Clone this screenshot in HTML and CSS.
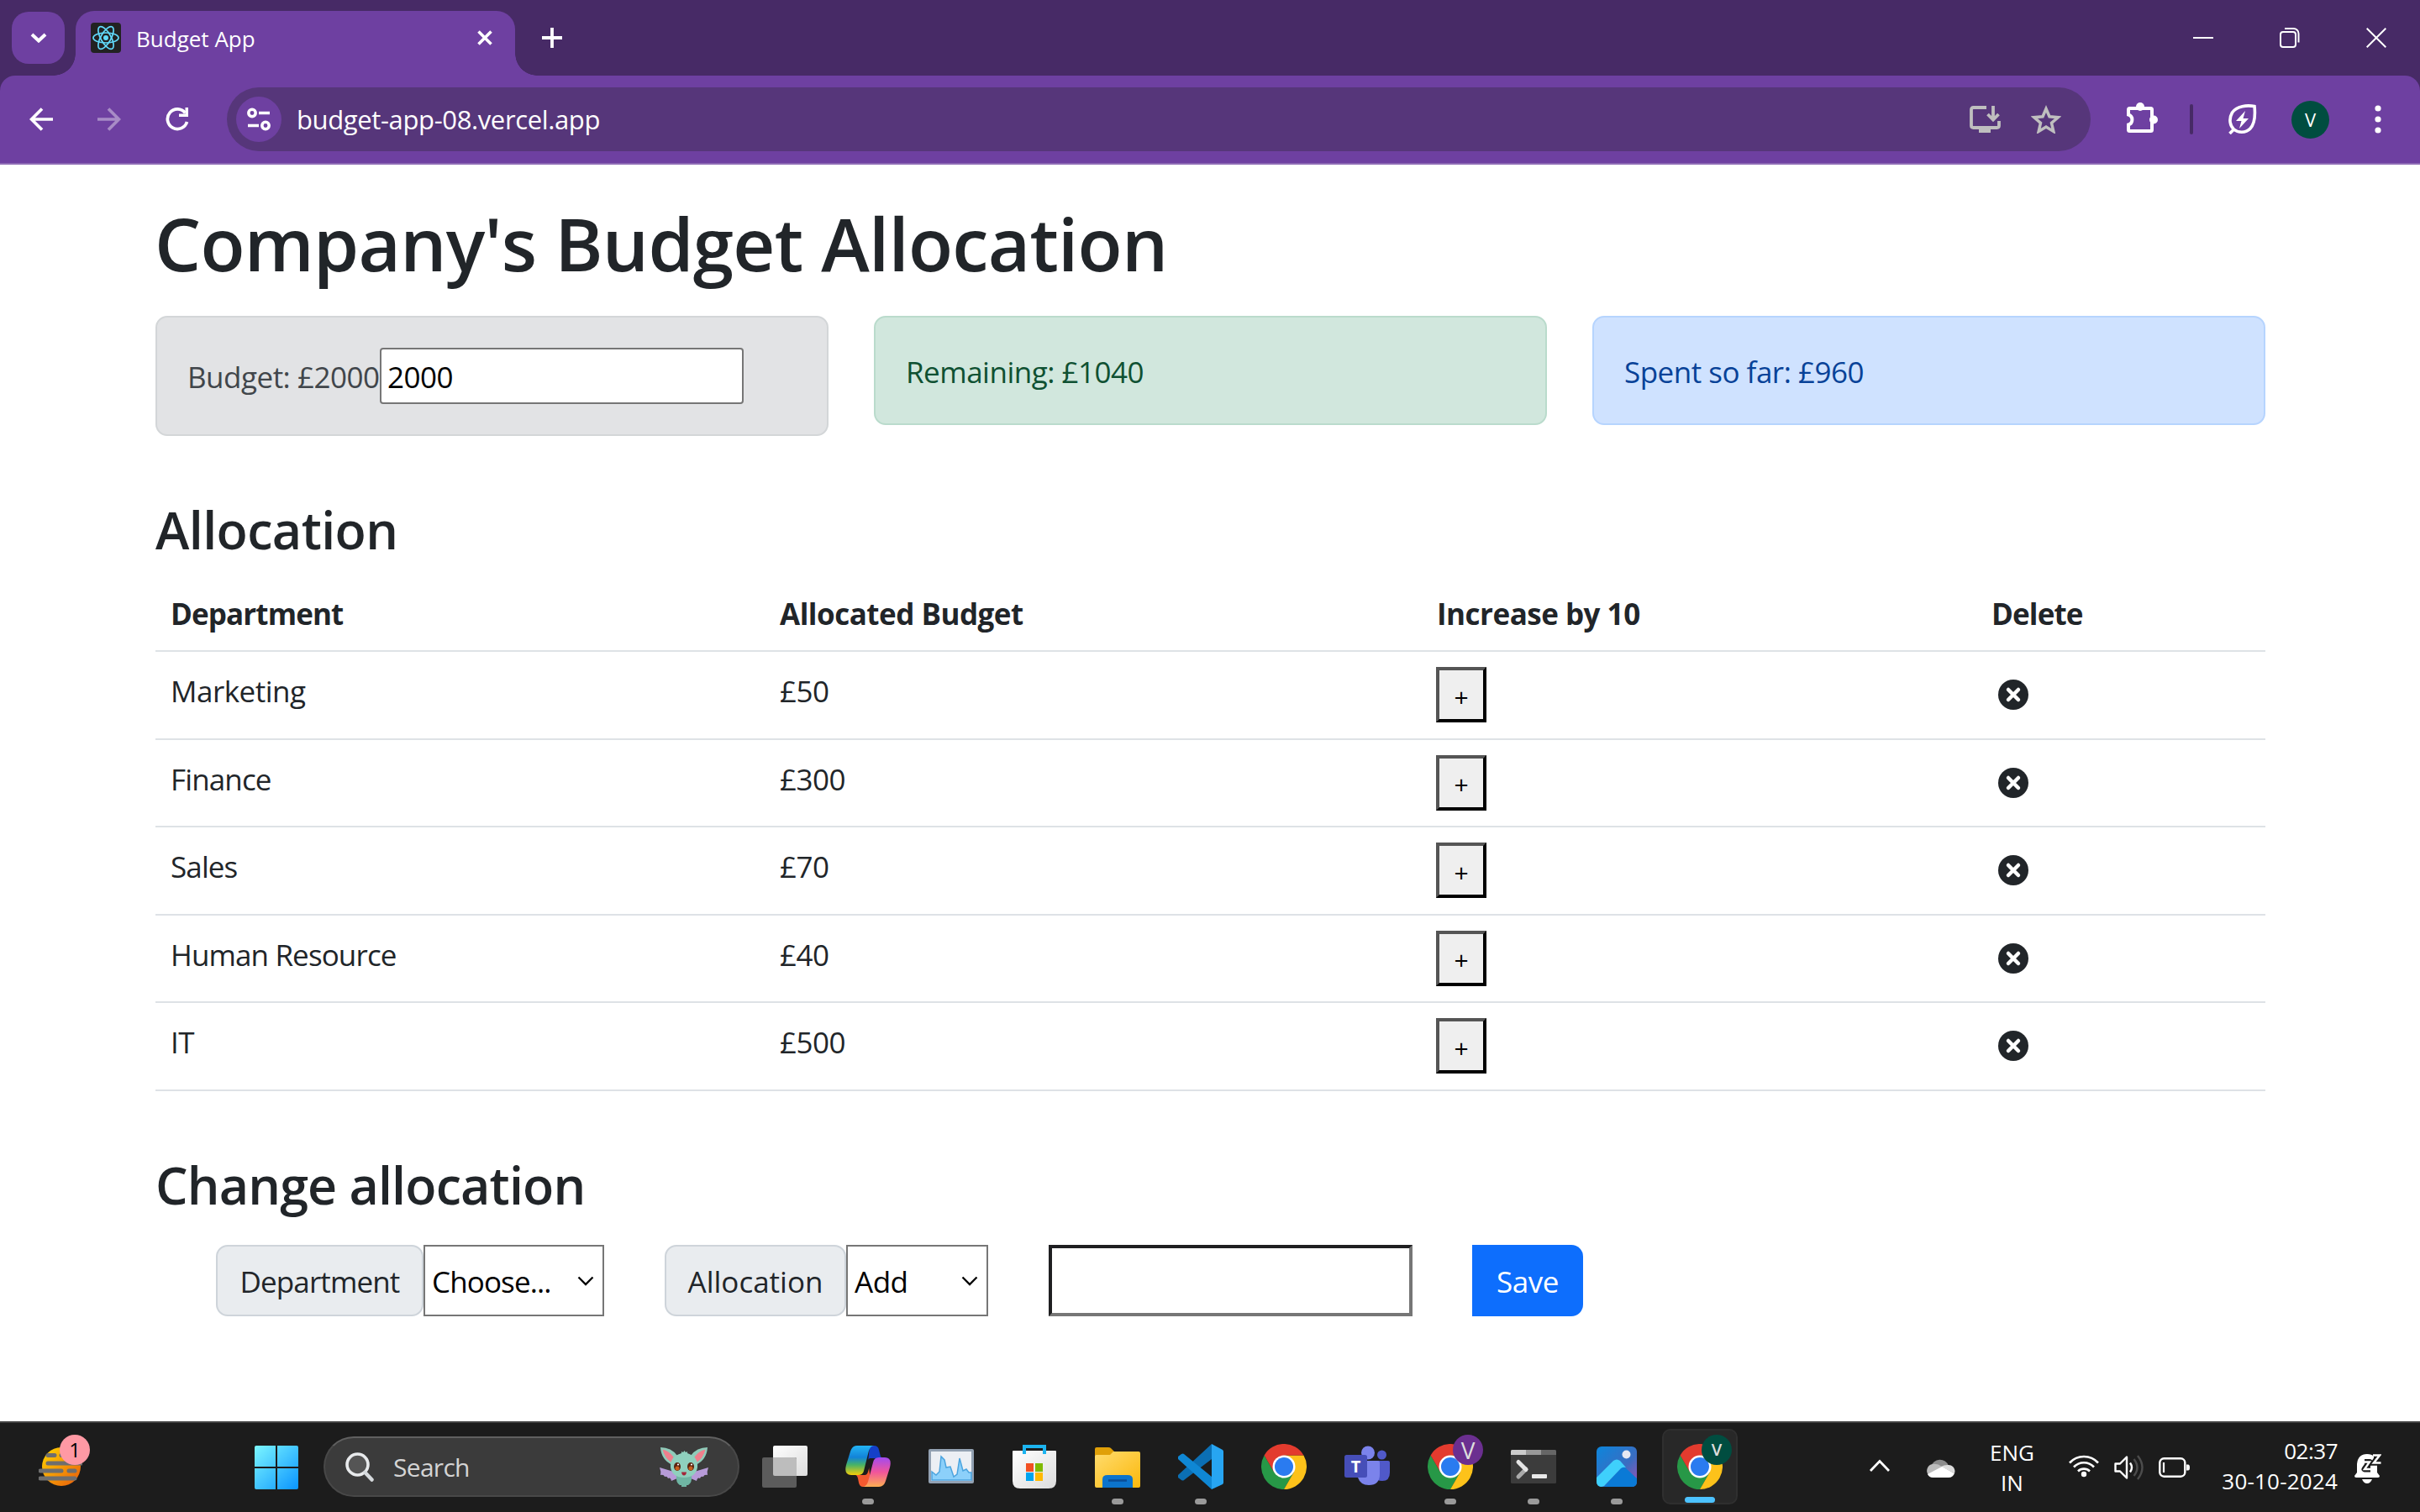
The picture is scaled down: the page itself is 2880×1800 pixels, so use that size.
FILE: index.html
```html
<!DOCTYPE html>
<html lang="en">
<head>
<meta charset="utf-8">
<title>Budget App</title>
<link rel="stylesheet" href="styles.css">
</head>
<body>
<header class="browser">
  <div class="tabstrip">
    <div class="tab-search"><svg width="20" height="12" viewBox="0 0 20 12"><path d="M2 2l8 7.500 8-7.500" fill="none" stroke="#fff" stroke-width="4"/></svg></div>
    <div class="tab">
      <svg class="favicon" width="36" height="36" viewBox="0 0 36 36"><rect width="36" height="36" rx="4" fill="#222"/><g fill="none" stroke="#61dafb" stroke-width="1.700"><ellipse cx="18" cy="18" rx="15" ry="6"/><ellipse cx="18" cy="18" rx="15" ry="6" transform="rotate(60 18 18)"/><ellipse cx="18" cy="18" rx="15" ry="6" transform="rotate(120 18 18)"/></g><circle cx="18" cy="18" r="3" fill="#61dafb"/></svg>
      <span class="tab-title">Budget App</span>
      <svg class="tab-close" width="18" height="18" viewBox="0 0 18 18"><path d="M1.500 1.500l15 15M16.500 1.500l-15 15" stroke="#fff" stroke-width="3.600"/></svg>
    </div>
    <svg class="new-tab" width="24" height="24" viewBox="0 0 24 24"><path d="M12 0v24M0 12h24" stroke="#fff" stroke-width="3.800"/></svg>
    <div class="window-controls">
      <svg width="24" height="24" viewBox="0 0 24 24"><path d="M0 12h24" stroke="#fff" stroke-width="2"/></svg>
      <svg width="24" height="24" viewBox="0 0 24 24"><g fill="none" stroke="#fff" stroke-width="2"><rect x="1" y="5" width="18" height="18" rx="3"/><path d="M6 1h10.500a6 6 0 0 1 6 6v10.500"/></g></svg>
      <svg width="24" height="24" viewBox="0 0 24 24"><path d="M.7.7l22.600 22.600M23.300.7L.7 23.300" stroke="#fff" stroke-width="2"/></svg>
    </div>
  </div>
  <div class="toolbar">
    <svg class="nav" width="28" height="28" viewBox="0 0 28 28"><path d="M28 14H3M15 1.500L2.500 14 15 26.500" fill="none" stroke="#fff" stroke-width="3.700"/></svg>
    <svg class="nav forward" width="28" height="28" viewBox="0 0 28 28"><path d="M0 14h25M13 1.500L25.500 14 13 26.500" fill="none" stroke="#fff" stroke-width="3.700"/></svg>
    <svg class="nav" width="28" height="28" viewBox="0 0 28 28"><path d="M23.500 6.500A11.800 11.800 0 1 0 25.500 17" fill="none" stroke="#fff" stroke-width="3.700"/><path d="M27 0v11H16V7.500h7.500V0z" fill="#fff"/></svg>
    <div class="omnibox">
      <div class="site-info"><svg width="30" height="28" viewBox="0 0 30 28"><g fill="none" stroke="#fff" stroke-width="3.500"><circle cx="7" cy="6.500" r="4.200"/><path d="M15 6.500h13M2 21.500h13"/><circle cx="23" cy="21.500" r="4.200"/></g></svg></div>
      <span class="url">budget-app-08.vercel.app</span>
      <svg class="install" width="37" height="32" viewBox="0 0 37 32"><g fill="none" stroke="#bfbfbf" stroke-width="3.800"><path d="M20 2H4.500Q2 2 2 4.500v19Q2 26 4.500 26h28q2.500 0 2.500-2.500V18M28 0v16M21.500 10l6.500 6.500 6.500-6.500"/></g><path d="M11 26h14v6H11z" fill="#bfbfbf"/></svg>
      <svg width="36" height="34" viewBox="0 0 36 34"><path d="M18 4.500l4 9.300 10.200.9-7.700 6.700 2.300 10-8.800-5.300-8.800 5.300 2.300-10-7.700-6.700L14 13.800z" fill="none" stroke="#bfbfbf" stroke-width="3.500"/></svg>
    </div>
    <svg class="puzzle" width="38" height="36" viewBox="0 0 38 36"><path d="M2 8.500Q2 7 3.500 7h25Q30 7 30 8.500v24q0 1.500-1.500 1.500h-25Q2 34 2 32.500v-6a6.300 6.300 0 0 0 0-12z" fill="none" stroke="#fff" stroke-width="4"/><circle cx="16" cy="5" r="5" fill="#fff"/><circle cx="32" cy="20.500" r="5" fill="#fff"/></svg>
    <i class="divider"></i>
    <svg class="leaf" width="34" height="36" viewBox="0 0 34 36"><path d="M31 2.500C22 1 10 2 4.500 10 0 18 2 26 6.500 30s14 5 19.500-1S32 12 31 2.500zM1.500 35l6-6" fill="none" stroke="#fff" stroke-width="3.600"/><path d="M20 8L9 20h6.500L13 29l11-12h-6.500z" fill="#fff"/></svg>
    <div class="avatar">V</div>
    <svg class="menu" width="8" height="34" viewBox="0 0 8 34" fill="#fff"><circle cx="4" cy="4" r="3.600"/><circle cx="4" cy="17" r="3.600"/><circle cx="4" cy="30" r="3.600"/></svg>
  </div>
</header>

<main class="container">
  <h1>Company's Budget Allocation</h1>
  <section class="alerts">
    <div class="alert secondary"><span>Budget: £2000</span><div class="budget-input"><span>2000</span></div></div>
    <div class="alert success"><span>Remaining: £1040</span></div>
    <div class="alert primary"><span>Spent so far: £960</span></div>
  </section>
  <h3 class="allocation-title">Allocation</h3>
  <div class="table">
    <div class="row head"><b class="tight">Department</b><b>Allocated Budget</b><b>Increase by 10</b><b class="tight">Delete</b></div>
    <div class="row"><span>Marketing</span><span>£50</span><button class="plus">+</button><svg class="delete" viewBox="0 0 36 36"><use href="#x"/></svg></div>
    <div class="row"><span class="tight">Finance</span><span>£300</span><button class="plus">+</button><svg class="delete" viewBox="0 0 36 36"><use href="#x"/></svg></div>
    <div class="row"><span class="tight">Sales</span><span>£70</span><button class="plus">+</button><svg class="delete" viewBox="0 0 36 36"><use href="#x"/></svg></div>
    <div class="row"><span class="tight">Human Resource</span><span>£40</span><button class="plus">+</button><svg class="delete" viewBox="0 0 36 36"><use href="#x"/></svg></div>
    <div class="row"><span>IT</span><span>£500</span><button class="plus">+</button><svg class="delete" viewBox="0 0 36 36"><use href="#x"/></svg></div>
  </div>
  <h3 class="change-title">Change allocation</h3>
  <form class="change">
    <div class="label department"><span class="tight">Department</span></div>
    <div class="select wide"><span class="tight">Choose...</span><svg width="20" height="12" viewBox="0 0 20 12"><path d="M1.500 1.500L10 10l8.500-8.500" fill="none" stroke="#000" stroke-width="2.300"/></svg></div>
    <div class="label kind"><span>Allocation</span></div>
    <div class="select"><span>Add</span><svg width="20" height="12" viewBox="0 0 20 12"><path d="M1.500 1.500L10 10l8.500-8.500" fill="none" stroke="#000" stroke-width="2.300"/></svg></div>
    <div class="amount"></div>
    <div class="save"><span>Save</span></div>
  </form>
</main>

<footer class="taskbar">
  <div class="widget"><svg width="52" height="46" viewBox="0 0 52 46"><defs><linearGradient id="sun" x1="0" y1="0" x2="1" y2="1"><stop offset="0" stop-color="#ffd800"/><stop offset="1" stop-color="#e8590c"/></linearGradient></defs><circle cx="27" cy="23" r="23" fill="url(#sun)"/><path d="M11 9.500h8M27 9.500h6M11 19h40M2 28h25M36 28h7M2 37h41" stroke="#6e6e6e" stroke-width="5" stroke-linecap="round"/></svg><span class="count">1</span></div>
  <svg class="start" width="52" height="52" viewBox="0 0 52 52"><defs><linearGradient id="win" x1="0" y1="0" x2="1" y2="1"><stop offset="0" stop-color="#7cf6ff"/><stop offset="1" stop-color="#0a94ff"/></linearGradient></defs><path d="M2 0h23v25H0V2Q0 0 2 0zM27 0h23q2 0 2 2v23H27zM0 27h25v25H2q-2 0-2-2zM27 27h25v23q0 2-2 2H27z" fill="url(#win)"/></svg>
  <div class="search">
    <svg width="34" height="35" viewBox="0 0 34 35"><circle cx="14.500" cy="14.500" r="12.500" fill="#555" stroke="#e8eaec" stroke-width="3.600"/><path d="M23.500 24l8 8.500" stroke="#d6dadd" stroke-width="4.500" stroke-linecap="round"/></svg>
    <span>Search</span>
    <svg class="bat" width="58" height="48" viewBox="0 0 58 48"><path d="M20 31L0 25q2 5 1 9 4-1 5 2 3-1 4 2 3-2 4 3l7-3zM38 31l20-6q-2 5-1 9-4-1-5 2-3-1-4 2-3-2-4 3l-7-3z" fill="#b79bd8"/><path d="M15 22Q2 16 1 1q13 0 20 10zM43 22Q56 16 57 1q-13 0-20 10z" fill="#8fcbb9"/><path d="M14 19Q6 14 3.500 3.500q8 2 13 9zM44 19Q52 14 54.500 3.500q-8 2-13 9z" fill="#ef7f8c"/><path d="M20 34h18q1 9-4 12h-2v2h-6v-2h-2q-5-3-4-12z" fill="#6fb5a3"/><path d="M26 6l2 1 1.500-2L31 7l2-1v2q13 4 12 17-2 12-16 12T13 25Q12 12 26 8z" fill="#8fd0bd"/><ellipse cx="21" cy="24" rx="4" ry="5" fill="#5a2510"/><ellipse cx="37" cy="24" rx="4" ry="5" fill="#5a2510"/><ellipse cx="21" cy="26" rx="2.500" ry="2.500" fill="#c8601c"/><ellipse cx="37" cy="26" rx="2.500" ry="2.500" fill="#c8601c"/><circle cx="22" cy="21.500" r="1.100" fill="#fff"/><circle cx="38" cy="21.500" r="1.100" fill="#fff"/><path d="M26 30.500h6q-.5 4-3 4t-3-4z" fill="#a3263a"/></svg>
  </div>
  <div class="apps">
    <div class="app"><svg width="54" height="54" viewBox="0 0 54 54"><defs><linearGradient id="wh" x1="0" y1="0" x2="1" y2="1"><stop offset="0" stop-color="#fff"/><stop offset="1" stop-color="#dcdcdc"/></linearGradient></defs><rect x="13" y="2" width="41" height="36" rx="2" fill="url(#wh)"/><rect x="0" y="16" width="41" height="36" rx="2" fill="#5c5c5c"/><path d="M13 16h26q2 0 2 2v20H15q-2 0-2-2z" fill="#bdbdbd"/></svg></div>
    <div class="app running"><svg width="54" height="54" viewBox="0 0 54 54"><defs><linearGradient id="c1" x1="0" y1="0" x2="0" y2="1"><stop offset="0" stop-color="#23b4f4"/><stop offset=".4" stop-color="#1283d8"/><stop offset=".65" stop-color="#46b268"/><stop offset="1" stop-color="#f6cd09"/></linearGradient><linearGradient id="c2" x1="0" y1="0" x2="0" y2="1"><stop offset="0" stop-color="#a24af0"/><stop offset=".5" stop-color="#f0559b"/><stop offset="1" stop-color="#fdae52"/></linearGradient></defs><path d="M29 2h5q5 0 6 5l2 8q1 2 4 2H35q-6 0-8 5z" fill="#1440c8"/><path d="M14 37h6q5 0 6-5l2-5 2 17-5 7h-4q-4 0-5-5l-1-5q-1-4-3-4z" fill="#f4592f"/><path d="M14 2h20q-4 0-6 6l-6 24q-1 5-7 5H7q-9 0-6-12L6 9q2-7 8-7z" fill="url(#c1)"/><path d="M40 51H20q5 0 7-6l6-23q1-6 7-6h7q9 0 6 12l-5 16q-2 7-8 7z" fill="url(#c2)"/><path d="M29 17h5q-3 2-4 6l-3 10q-1 4-4 4h-3q2-1 3-5l3-11q1-3 3-4z" fill="#1c1c1c"/></svg></div>
    <div class="app"><svg width="54" height="54" viewBox="0 0 54 54"><rect y="6" width="54" height="41" rx="2" fill="#93a1b2"/><rect x="3" y="9" width="48" height="35" fill="#eceff4"/><path d="M4 33l5 4 4-4 2-18 4 4 2 9 5-1 4 12 4-3 3-19 4 15 4-2 3 4h3v9H4z" fill="#8cd0fa" stroke="#4ba4df" stroke-width="1.500"/></svg></div>
    <div class="app"><svg width="54" height="54" viewBox="0 0 54 54"><path d="M15 11V3h24v8" fill="none" stroke="#1cb4f0" stroke-width="4"/><path d="M1 9q0-1 1-1h50q1 0 1 1v35q0 9-9 9H10q-9 0-9-9z" fill="url(#wh)"/><path d="M13 8h4v4h-4zM37 8h4v4h-4z" fill="#1cb4f0"/><path d="M17 23h9v10h-9z" fill="#f25022"/><path d="M28 23h9v10h-9z" fill="#7fba00"/><path d="M17 35h9v10h-9z" fill="#00a4ef" transform="translate(0 -1)"/><path d="M28 34h9v10h-9z" fill="#ffb900"/></svg></div>
    <div class="app running"><svg width="54" height="54" viewBox="0 0 54 54"><defs><linearGradient id="fo" x1="0" y1="0" x2="1" y2="1"><stop offset="0" stop-color="#ffdc6e"/><stop offset="1" stop-color="#fbb80c"/></linearGradient></defs><path d="M0 6q0-2 2-2h14q2 0 3 1l4 4v10H0z" fill="#e0a008"/><path d="M0 15q0-2 2-2h16l4-4h30q2 0 2 2v39q0 2-2 2H2q-2 0-2-2z" fill="url(#fo)"/><path d="M9 52V42q0-5 6-5h24q6 0 6 5v10z" fill="#0c74cc"/><path d="M16 43.500h22" stroke="#0a4d96" stroke-width="2.500"/></svg></div>
    <div class="app running"><svg width="54" height="54" viewBox="0 0 54 54"><path d="M40 0L0 37q-1 2 0 3l4 3q2 1 3 0l33-25z" fill="#0b6fb4"/><path d="M40 54L0 18q-1-2 0-3l4-3q2-1 3 0l33 27z" fill="#0f87d4"/><path d="M40 0l13 7q1 1 1 2v37q0 1-1 2l-13 6z" fill="#27a5f2"/></svg></div>
    <div class="app"><svg width="54" height="54" viewBox="0 0 54 54"><use href="#chrome"/></svg></div>
    <div class="app"><svg width="54" height="54" viewBox="0 0 54 54"><circle cx="44.500" cy="13" r="5.500" fill="#5059c9"/><path d="M38 20h14q2 0 2 2v12q0 10-9 10-7 0-9-5z" fill="#5059c9"/><circle cx="28" cy="10.500" r="8" fill="#7b83eb"/><path d="M19 20h21q2 0 2 2v14q0 13-13 13-10 0-13-9z" fill="#7b83eb"/><rect y="13" width="27" height="27" rx="2.500" fill="#464eb8"/><text x="13.500" y="33.500" text-anchor="middle" class="glyph" font-size="20">T</text></svg></div>
    <div class="app running"><svg width="54" height="54" viewBox="0 0 54 54"><use href="#chrome"/></svg><span class="profile purple">V</span></div>
    <div class="app running"><svg width="54" height="54" viewBox="0 0 54 54"><rect y="7" width="54" height="40" rx="1.500" fill="#3c3c3c"/><path d="M0 13V8.500Q0 7 1.500 7H18v6z" fill="#ccc"/><path d="M18 7h18v6H18z" fill="#999"/><path d="M36 7h16.500Q54 7 54 8.500V13H36z" fill="#666"/><path d="M18 30l-9 9" stroke="#aaa" stroke-width="5" stroke-linecap="round"/><path d="M9 21.500l9 9" stroke="#e4e4e4" stroke-width="5" stroke-linecap="round"/><rect x="25" y="36" width="18" height="5" rx="1" fill="#e8e8e8"/></svg></div>
    <div class="app running"><svg width="54" height="54" viewBox="0 0 54 54"><defs><linearGradient id="ph" x1="0" y1="0" x2="1" y2="1"><stop offset="0" stop-color="#0c86dc"/><stop offset=".6" stop-color="#3b6cc0"/><stop offset="1" stop-color="#a050b4"/></linearGradient></defs><rect x="3" y="3" width="48" height="48" rx="6" fill="url(#ph)"/><path d="M12 51l20-22q3-3 6 0l13 12v4q0 6-6 6z" fill="#0a7ad6"/><path d="M3 40l20-20q4-3 8 0l7 8q-3-1-6 1L12 50q-2 1-4 1-5-1-5-6z" fill="#3fd0fc"/><circle cx="38.500" cy="12.500" r="5" fill="#e6e8f2"/></svg></div>
    <div class="app active"><svg width="54" height="54" viewBox="0 0 54 54"><use href="#chrome"/></svg><span class="profile green">V</span></div>
  </div>
  <div class="tray">
    <svg class="caret" width="26" height="16" viewBox="0 0 26 16"><path d="M2 14L13 2.500 24 14" fill="none" stroke="#fff" stroke-width="2.800"/></svg>
    <svg class="cloud" width="36" height="24" viewBox="0 0 36 24"><path d="M7 11a11 11 0 0 1 21-1l-10 4z" fill="#8c8c8c"/><path d="M4 21A8 8 0 0 1 9 8q6-1 11 3L5 22z" fill="#bcbcbc"/><path d="M27 9a7.500 7.500 0 0 1 8 10l-16-8q3-2 8-2z" fill="#dcdcdc"/><path d="M3 20l17-9 15 8q-2 5-7 5H9q-4 0-6-4z" fill="#fff"/></svg>
    <div class="lang"><span>ENG</span><span>IN</span></div>
    <svg class="wifi" width="36" height="28" viewBox="0 0 36 28"><g fill="none" stroke="#fff" stroke-width="2.600"><path d="M1 10.500a23 23 0 0 1 34 0M6 15.500a16.500 16.500 0 0 1 24 0M11 20.500a10 10 0 0 1 14 0"/></g><circle cx="18" cy="24" r="3.200" fill="#fff"/></svg>
    <svg class="volume" width="36" height="32" viewBox="0 0 36 32"><path d="M1.500 11.500h5.500l8-8v25l-8-8H1.500z" fill="none" stroke="#fff" stroke-width="2.400" stroke-linejoin="round"/><path d="M19 10.500q4 5.500 0 11" fill="none" stroke="#fff" stroke-width="2.400"/><path d="M23.500 6q8 10 0 20M28 2q11 14 0 28" fill="none" stroke="#4c4c4c" stroke-width="2.400"/></svg>
    <svg class="battery" width="37" height="24" viewBox="0 0 37 24"><rect x="1.300" y="1.300" width="30" height="21.400" rx="5" fill="none" stroke="#fff" stroke-width="2.400"/><path d="M33 8.500h2q2 0 2 3.500t-2 3.500h-2z" fill="#fff"/><path d="M6 6v12" stroke="#fff" stroke-width="2.200"/></svg>
    <div class="clock"><span class="time">02:37</span><span class="date">30-10-2024</span></div>
    <svg class="bell" width="32" height="36" viewBox="0 0 32 36"><path d="M3 23V13Q4 1 15 1t12 12v10l3 4q0 2-2 2H2q-2 0-2-2zM9 31h12q-2 5-6 5t-6-5z" fill="#fff"/><path d="M12 10.500h6l-6 8.500h7" fill="none" stroke="#1c1c1c" stroke-width="7" stroke-linejoin="round"/><path d="M12 10.500h6l-6 8.500h7" fill="none" stroke="#fff" stroke-width="2.400"/><path d="M23 2.500h6l-6 9h8" fill="none" stroke="#1c1c1c" stroke-width="6.500"/><path d="M22 2.500h8l-7 9h8.500" fill="none" stroke="#fff" stroke-width="2.600"/></svg>
  </div>
</footer>

<svg width="0" height="0" class="defs"><defs>
  <g id="x"><circle cx="18" cy="18" r="18" fill="#212529"/><path d="M12 12l12 12M24 12L12 24" stroke="#fff" stroke-width="4.500" stroke-linecap="round"/></g>
  <g id="chrome"><path d="M3.600 13.500A27 27 0 0 0 27 54l11.700-20.250L27 27l-11.700 6.750z" fill="#279847"/><path d="M27 54A27 27 0 0 0 50.400 13.500H27l11.700 20.250z" fill="#fdc21a"/><path d="M3.600 13.500a27 27 0 0 1 46.800 0H27L15.300 33.750z" fill="#e33b2e"/><circle cx="27" cy="27" r="13.500" fill="#fff"/><circle cx="27" cy="27" r="11" fill="#2a7bf0"/></g>
</defs></svg>
</body>
</html>
```
FILE: styles.css
```css
* { box-sizing: border-box; }
body { margin: 0; width: 2880px; height: 1800px; display: flex; flex-direction: column; overflow: hidden; background: #fff; color: #212529; font: 35px/54px "Open Sans", "Noto Sans", sans-serif; }
svg { display: block; flex: none; }
span, b { white-space: nowrap; }
.defs { position: absolute; }

.browser { height: 196px; background: #472a66; color: #fff; }
.tabstrip { height: 90px; display: flex; align-items: flex-start; }
.tab-search { width: 63px; height: 62px; margin: 14px 13px 0 14px; border-radius: 20px; background: #6e40a1; display: flex; align-items: center; justify-content: center; }
.tab { position: relative; width: 523px; height: 77px; margin-top: 13px; padding: 0 27px 0 18px; border-radius: 22px 22px 0 0; background: #6e40a1; display: flex; }
.tab::before, .tab::after { content: ""; position: absolute; bottom: 0; width: 26px; height: 26px; }
.tab::before { left: -26px; background: radial-gradient(circle at 0 0, transparent 25.500px, #6e40a1 26px); }
.tab::after { right: -26px; background: radial-gradient(circle at 100% 0, transparent 25.500px, #6e40a1 26px); }
.favicon { margin-top: 14px; }
.tab-title { margin: 13px auto 0 18px; font-size: 26px; line-height: 40px; }
.tab-close { margin-top: 23px; }
.new-tab { margin: 33px 0 0 32px; }
.window-controls { margin: 33px 40px 0 auto; display: flex; gap: 79px; }
.toolbar { height: 106px; padding: 0 46px 0 35px; border-bottom: 2px solid #8d6bb5; border-radius: 18px 18px 0 0; background: #6e40a1; display: flex; align-items: center; }
.nav { margin-right: 53px; }
.forward { opacity: .4; }
.omnibox { width: 2218px; height: 76px; margin-left: -8px; padding: 0 35px 0 11px; border-radius: 38px; background: #56367a; display: flex; align-items: center; }
.site-info { width: 54px; height: 54px; border-radius: 50%; background: #6e40a1; display: flex; align-items: center; justify-content: center; }
.url { margin: 0 auto 0 18px; font-size: 31px; letter-spacing: -.37px; }
.install { margin-right: 36px; }
.puzzle { margin: -4px 0 0 43px; }
.divider { width: 4px; height: 36px; margin-left: 37px; border-radius: 2px; background: #472a66; }
.leaf { margin-left: 42px; }
.avatar { width: 45px; height: 45px; margin-left: 41px; border-radius: 50%; background: #004d40; font-size: 22px; line-height: 45px; text-align: center; }
.menu { margin-left: auto; }

.container { height: 1496px; padding: 0 184px 0 185px; display: flex; flex-direction: column; letter-spacing: -.5px; }
.tight { letter-spacing: -.88px; }
h1, h3 { margin: 0; font-weight: 600; }
h1 { margin: 39px 0 0 -1px; height: 141px; font-size: 87px; line-height: 108px; letter-spacing: -.75px; }
h3 { font-size: 61px; line-height: 76px; letter-spacing: -.6px; }
.alerts { height: 143px; display: grid; grid-template-columns: repeat(3, 801px); gap: 54px; align-items: start; }
.alert { height: 130px; padding: 38px 36px 0; border: 2px solid; border-radius: 14px; display: flex; }
.secondary { height: 143px; padding-top: 36px; background: #e2e3e5; border-color: #d3d6d8; color: #41464b; }
.secondary > span { padding-top: 8px; }
.success { background: #d1e7dd; border-color: #badbcc; color: #0f5132; }
.primary { background: #cfe2ff; border-color: #b6d4fe; color: #084298; }
.budget-input { width: 433px; height: 67px; margin-left: auto; margin-right: 63px; padding: 6px 7px; border: 2px solid #767676; border-radius: 4px; background: #fff; color: #000; }
.allocation-title { margin-top: 74px; }
.table { margin-top: 15px; }
.row { height: 104.600px; padding: 18px; border-bottom: 2px solid #dee2e6; display: grid; grid-template-columns: 725px 782px 660px 1fr; align-items: start; }
.row > span, .row > b { padding-top: 2px; }
.head { height: 92px; }
.head b { font-weight: 700; }
.plus { width: 60px; height: 66px; margin-left: -1px; padding: 5px 0 0; border: 4px solid; border-color: #555 #000 #000 #555; background: #efefef; color: #000; font: 30px/50px "Open Sans", sans-serif; }
.delete { width: 36px; height: 36px; margin: 15px 0 0 8px; }
.change-title { margin-top: 74px; letter-spacing: -.85px; }
.change { margin: 33px 0 0 72px; display: flex; }
.label, .select, .amount, .save { height: 85px; display: flex; padding-top: 15px; }
.label { border: 2px solid #ced4da; border-radius: 14px; background: #e9ecef; justify-content: center; }
.department { width: 247px; }
.kind { width: 216px; margin-left: 72px; letter-spacing: 0; }
.select { width: 169px; padding-left: 8px; padding-right: 10px; border: 2px solid #767676; color: #000; justify-content: space-between; }
.wide { width: 215px; }
.select svg { margin-top: 20px; }
.amount { width: 433px; margin-left: 72px; border: 4px solid; border-color: #1f1f21 #767676 #767676 #1f1f21; }
.save { width: 132px; margin-left: 71px; padding-top: 17px; border-radius: 0 14px 14px 0; background: #0d6efd; color: #fff; justify-content: center; }

.taskbar { height: 108px; border-top: 2px solid #414141; background: #1c1c1c; color: #fff; display: flex; align-items: flex-start; }
.widget { position: relative; margin: 29px 0 0 46px; }
.count { position: absolute; left: 25px; top: -15px; width: 36px; height: 36px; border-radius: 50%; background: #ff99a4; color: #000; font-size: 24px; line-height: 36px; text-align: center; }
.start { margin: 27px 0 0 205px; }
.search { width: 495px; height: 72px; margin: 16px 5px 0 30px; padding: 0 35px 0 24px; border: 2px solid #484848; border-top-color: #606060; border-radius: 36px; background: #3b3b3b; color: #d4d4d4; font-size: 30px; letter-spacing: -.7px; display: flex; align-items: center; }
.search span { margin: 2px auto 0 23px; }
.apps { display: flex; }
.app { position: relative; width: 99px; height: 106px; padding: 25px 23px 0 22px; }
.running::after, .active::after { content: ""; position: absolute; left: 42px; bottom: 9px; width: 14px; height: 7px; border-radius: 4px; background: #9a9a9a; }
.active { width: 90px; height: 90px; margin: 7px 0 0 4px; padding: 18px; border: 2px solid #2f2f2f; border-radius: 10px; background: #282828; }
.active svg { margin: -2px; }
.active::after { left: 25px; bottom: 0; width: 36px; background: #4cc2ff; }
.profile { position: absolute; right: 11px; top: 14px; width: 36px; height: 36px; border-radius: 50%; background: #6b2f90; color: #ddd; font-size: 28px; line-height: 36px; text-align: center; }
.green { right: 5px; top: 5px; background: #004d40; font-size: 20px; font-weight: 600; }
.glyph { fill: #fff; font-family: "Open Sans", sans-serif; font-weight: 700; }
.tray { margin-left: auto; padding-right: 46px; display: flex; font-size: 26px; line-height: 36px; }
.caret { margin: 43px 41px 0 0; }
.cloud { margin: 41px 0 0; }
.lang { width: 51px; margin: 17px 0 0 42px; display: flex; flex-direction: column; align-items: center; }
.wifi { margin: 37px 0 0 42px; }
.volume { margin: 37px 0 0 18px; }
.battery { margin: 41px 0 0 17px; }
.clock { width: 176px; margin-top: 15px; display: flex; flex-direction: column; align-items: flex-end; }
.time { letter-spacing: -.5px; }
.date { letter-spacing: .2px; }
.bell { margin: 36px 0 0 20px; }
```
